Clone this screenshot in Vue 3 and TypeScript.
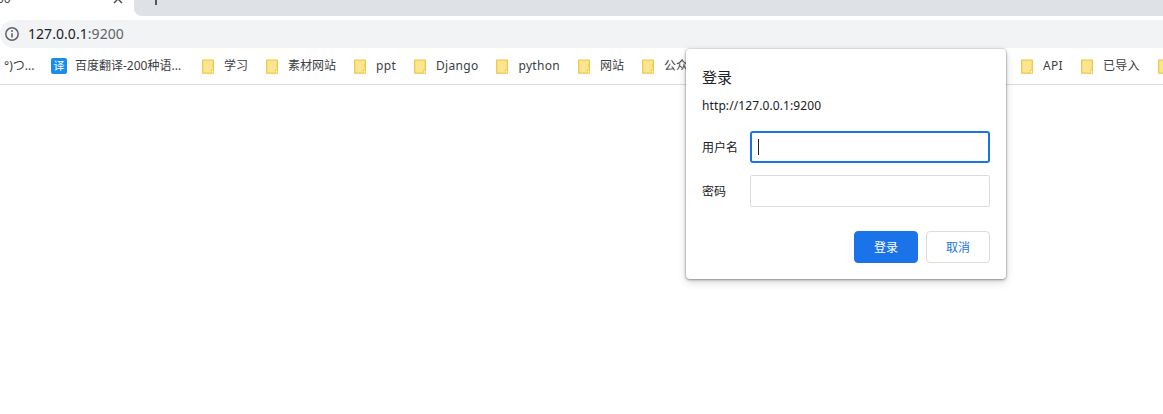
<script setup lang="ts">
interface Bookmark {
  name: string
  spaced?: boolean
}
const leftBookmarks: Bookmark[] = [
  { name: '学习' },
  { name: '素材网站' },
  { name: 'ppt', spaced: true },
  { name: 'Django', spaced: true },
  { name: 'python', spaced: true },
  { name: '网站' },
  { name: '公众号' },
]
const rightBookmarks: Bookmark[] = [
  { name: 'API', spaced: true },
  { name: '已导入', spaced: true },
  { name: '' },
]
</script>

<template>
  <div class="page">
    <div class="tabstrip">
      <div class="tab">
        <span class="tab-title">00</span>
        <svg class="tab-close" width="10" height="10" viewBox="0 0 10 10"><path d="M1 1l8 8M9 1l-8 8" stroke="#45484c" stroke-width="1.4" fill="none" /></svg>
      </div>
      <div class="tab-rest">
        <svg class="plus" width="12" height="12" viewBox="0 0 12 12"><path d="M6 0v12M0 6h12" stroke="#45484c" stroke-width="1.8" fill="none" /></svg>
      </div>
    </div>
    <div class="toolbar">
      <div class="omnibox">
        <svg class="info" width="16" height="16" viewBox="0 0 16 16">
          <circle cx="8" cy="8" r="6.2" fill="none" stroke="#5f6368" stroke-width="1.5" />
          <path d="M8 7.2v4.2" stroke="#5f6368" stroke-width="1.6" />
          <circle cx="8" cy="5" r="1" fill="#5f6368" />
        </svg>
        <span class="url">127.0.0.1<span class="port">:9200</span></span>
      </div>
    </div>
    <div class="bookmarks">
      <span class="bm-text first">°)つ...</span>
      <span class="bm translate">
        <span class="tr-icon">译</span>
        <span class="bm-text tr-text">百度翻译-200种语...</span>
      </span>
      <span v-for="b in leftBookmarks" :key="b.name" class="bm">
        <svg class="folder" width="12" height="15" viewBox="0 0 12 15">
          <path d="M.7 1.200h10.600v13H.7z" fill="#fee590" stroke="#efc84a" stroke-width="1.300" />
          <rect x="9.300" y="11.200" width="2" height="3" fill="#fff" stroke="#efc84a" stroke-width="0.800" />
        </svg>
        <span class="bm-text" :class="{ spaced: b.spaced }">{{ b.name }}</span>
      </span>
      <span class="hidden-run"></span>
      <span v-for="b in rightBookmarks" :key="'r' + b.name" class="bm">
        <svg class="folder" width="12" height="15" viewBox="0 0 12 15">
          <path d="M.7 1.200h10.600v13H.7z" fill="#fee590" stroke="#efc84a" stroke-width="1.300" />
          <rect x="9.300" y="11.200" width="2" height="3" fill="#fff" stroke="#efc84a" stroke-width="0.800" />
        </svg>
        <span class="bm-text" :class="{ spaced: b.spaced }">{{ b.name }}</span>
      </span>
    </div>

    <div class="dialog">
      <div class="title">登录</div>
      <div class="origin">http://127.0.0.1:9200</div>
      <div class="form">
        <label class="row">
          <span class="label">用户名</span>
          <span class="input focused"><span class="caret"></span></span>
        </label>
        <label class="row">
          <span class="label">密码</span>
          <span class="input"></span>
        </label>
      </div>
      <div class="actions">
        <button class="btn primary">登录</button>
        <button class="btn">取消</button>
      </div>
    </div>
  </div>
</template>

<style scoped>
.page {
  position: relative;
  width: 1163px;
  height: 414px;
  overflow: hidden;
  background: #fff;
  font-family: "Noto Sans", "Noto Sans CJK SC", sans-serif;
  color: #202124;
}
.tabstrip {
  display: flex;
  height: 16px;
  margin-bottom: 4px;
}
.tab {
  position: relative;
  width: 134px;
  flex: none;
}
.tab-title {
  position: absolute;
  left: -3px;
  top: -9px;
  font-size: 12px;
  line-height: 16px;
  color: #45484c;
}
.tab-close {
  position: absolute;
  left: 113px;
  top: -6px;
}
.tab-rest {
  flex: 1;
  background: #dee1e6;
  border-bottom-left-radius: 8px;
  position: relative;
}
.plus {
  position: absolute;
  left: 16px;
  top: -7px;
}
.toolbar {
  height: 28px;
}
.omnibox {
  height: 28px;
  background: #f1f3f4;
  border-radius: 14px 0 0 14px;
  display: flex;
  align-items: center;
  padding-left: 4px;
}
.info {
  flex: none;
}
.url {
  margin-left: 8px;
  font-size: 14px;
  line-height: 28px;
  letter-spacing: 0.05px;
  color: #202124;
}
.port {
  color: #5f6368;
}
.bookmarks {
  height: 37px;
  box-sizing: border-box;
  border-bottom: 1px solid #dadce0;
  display: flex;
  align-items: center;
  gap: 18px;
  white-space: nowrap;
  padding-left: 4px;
}
.bm {
  display: inline-flex;
  align-items: center;
  gap: 10px;
  flex: none;
}
.bm-text {
  font-size: 12px;
  line-height: 16px;
  color: #3c4043;
}
.spaced {
  letter-spacing: 0.3px;
}
.first {
  width: 29px;
  flex: none;
}
.translate {
  gap: 8px;
}
.tr-text {
  width: 109px;
}
.tr-icon {
  width: 16px;
  height: 16px;
  border-radius: 2px;
  background: #1a8cf0;
  color: #fff;
  font-size: 11px;
  line-height: 16px;
  text-align: center;
}
.folder {
  flex: none;
}
.hidden-run {
  width: 285px;
  flex: none;
}
.dialog {
  position: absolute;
  left: 686px;
  top: 49px;
  width: 320px;
  height: 230px;
  box-sizing: border-box;
  padding: 16px;
  background: #fff;
  border-radius: 4px;
  box-shadow: 0 0 0 1px rgba(0, 0, 0, 0.08), 0 1px 3px rgba(60, 64, 67, 0.45), 0 3px 8px rgba(60, 64, 67, 0.2);
  display: flex;
  flex-direction: column;
}
.title {
  font-size: 15px;
  line-height: 24px;
  color: #202124;
}
.origin {
  margin-top: 8px;
  font-size: 12px;
  line-height: 18px;
  letter-spacing: 0.1px;
  color: #202124;
}
.form {
  margin-top: 16px;
  display: flex;
  flex-direction: column;
  gap: 12px;
}
.row {
  display: flex;
  align-items: center;
}
.label {
  width: 48px;
  flex: none;
  font-size: 12px;
  color: #202124;
}
.input {
  flex: 1;
  height: 32px;
  box-sizing: border-box;
  border: 1px solid #dadce0;
  border-radius: 2px;
  display: flex;
  align-items: center;
}
.input.focused {
  border: 2px solid #1a73e8;
  border-radius: 3px;
  padding-left: 6px;
}
.caret {
  width: 1px;
  height: 16px;
  background: #202124;
}
.actions {
  margin-top: auto;
  display: flex;
  justify-content: flex-end;
  gap: 8px;
}
.btn {
  width: 64px;
  height: 32px;
  padding: 0;
  box-sizing: border-box;
  font-family: inherit;
  font-size: 12px;
  background: #fff;
  color: #1a73e8;
  border: 1px solid #dadce0;
  border-radius: 4px;
}
.primary {
  background: #1a73e8;
  border-color: #1a73e8;
  color: #fff;
}
</style>
